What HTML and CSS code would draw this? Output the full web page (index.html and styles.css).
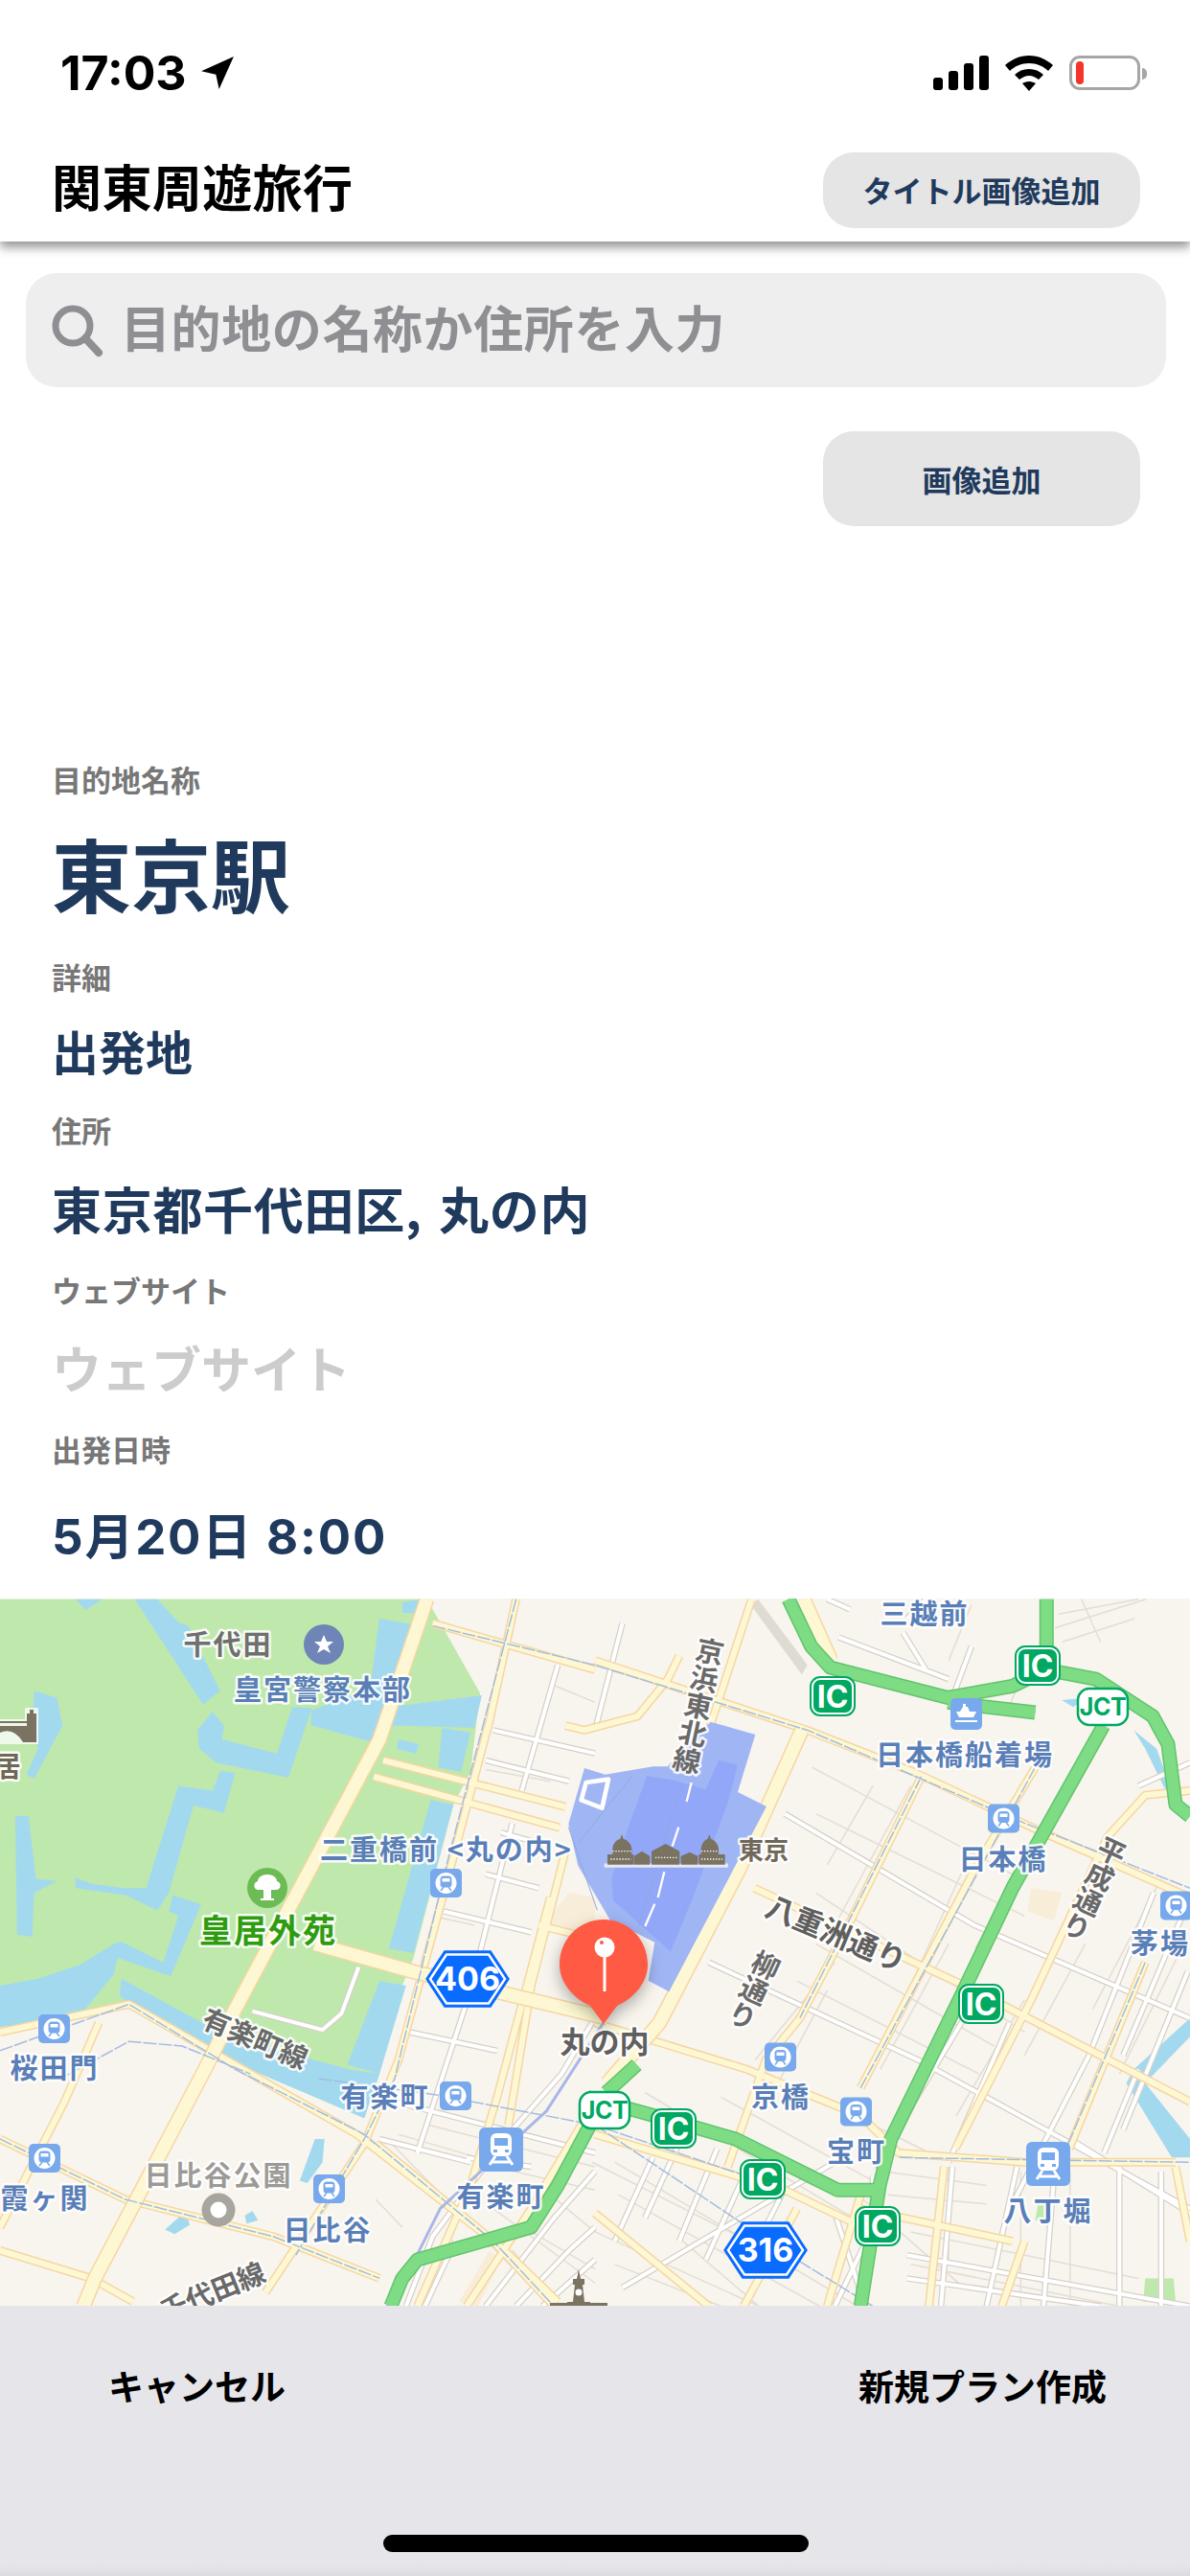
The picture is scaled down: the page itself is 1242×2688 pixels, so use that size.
FILE: index.html
```html
<!DOCTYPE html>
<html lang="ja">
<head>
<meta charset="utf-8">
<title>関東周遊旅行</title>
<link rel="stylesheet" href="styles.css">
</head>
<body>
<div class="page">
  <header class="top">
    <div class="status">
      <div class="clock"><span>17:03</span>
        <svg class="arrow" width="36" height="36" viewBox="0 0 33 33"><path d="M32 1 L1 15 L15 18 L18 32 Z"/></svg>
      </div>
      <div class="sys">
        <svg width="58" height="36" viewBox="0 0 58 36"><rect x="0" y="23" width="10" height="13" rx="3"/><rect x="16" y="16" width="10" height="20" rx="3"/><rect x="32" y="8" width="10" height="28" rx="3"/><rect x="48" y="0" width="10" height="36" rx="3"/></svg>
        <svg width="50" height="37" viewBox="0 0 50 37"><path d="M25 0 C15 0 7 4 0 10 L5 16 C10 11 17 8 25 8 C33 8 40 11 45 16 L50 10 C43 4 35 0 25 0 Z"/><path d="M25 14 C19 14 14 16 10 20 L15 25 C18 23 21 21 25 21 C29 21 32 23 35 25 L40 20 C36 16 31 14 25 14 Z"/><path d="M25 27 C22 27 20 28 18 29 L25 37 L32 29 C30 28 28 27 25 27 Z"/></svg>
        <div class="battery"><div class="level"></div><div class="nub"></div></div>
      </div>
    </div>
    <div class="titlebar">
      <h1 class="title">関東周遊旅行</h1>
      <button class="pill pill-title">タイトル画像追加</button>
    </div>
  </header>

  <main class="form">
    <div class="search">
      <svg width="56" height="56" viewBox="0 0 56 56" fill="none"><circle cx="23" cy="23" r="18" stroke="#8e8e93" stroke-width="7"/><path d="M36 36 L50 51" stroke="#8e8e93" stroke-width="8" stroke-linecap="round"/></svg>
      <span>目的地の名称か住所を入力</span>
    </div>
    <div class="image-row"><button class="pill pill-image">画像追加</button></div>

    <section class="fields">
      <div class="field f1"><div class="label">目的地名称</div><div class="value huge">東京駅</div></div>
      <div class="field f2"><div class="label">詳細</div><div class="value short">出発地</div></div>
      <div class="field f3"><div class="label">住所</div><div class="value address">東京都千代田区, 丸の内</div></div>
      <div class="field f4"><div class="label">ウェブサイト</div><div class="value empty">ウェブサイト</div></div>
      <div class="field f5"><div class="label">出発日時</div><div class="value date">5月20日 8:00</div></div>
    </section>
  </main>

  <div class="map">
    <svg class="map-svg" width="1242" height="738" viewBox="0 1668 1242 738">
      <defs>
        <symbol id="metro" viewBox="0 0 33 30">
          <rect width="33" height="30" rx="5" fill="#78a9ec"/>
          <circle cx="16.5" cy="15" r="11" fill="#fff"/>
          <rect x="10.5" y="7.500" width="12" height="12" rx="3.500" fill="#78a9ec"/>
          <rect x="12.500" y="10" width="8" height="3.500" fill="#fff"/>
          <path d="M11 23 L14 19 M22 23 L19 19" stroke="#78a9ec" stroke-width="1.500"/>
        </symbol>
        <symbol id="rail" viewBox="0 0 46 46">
          <rect width="46" height="46" rx="6" fill="#78a9ec"/>
          <rect x="12" y="6" width="22" height="24" rx="6" fill="#fff"/>
          <rect x="16" y="11" width="14" height="8" fill="#78a9ec"/>
          <rect x="15" y="23" width="4" height="3" fill="#78a9ec"/><rect x="27" y="23" width="4" height="3" fill="#78a9ec"/>
          <path d="M17 30 L11 39 M29 30 L35 39 M14 36 H32" stroke="#fff" stroke-width="3" fill="none"/>
        </symbol>
        <symbol id="ic" viewBox="0 0 48 42">
          <rect x="1" y="1" width="46" height="40" rx="10" fill="#fff" stroke="#00a862" stroke-width="2"/>
          <rect x="4" y="4" width="40" height="34" rx="7" fill="#00a862"/>
        </symbol>
        <symbol id="hex" viewBox="0 0 88 60">
          <path d="M20 1 H68 L87 30 L68 59 H20 L1 30 Z" fill="#0a6bff" stroke="#0a6bff" stroke-width="1.500"/>
          <path d="M22 4.500 H66 L83 30 L66 55.500 H22 L5 30 Z" fill="#0a6bff" stroke="#fff" stroke-width="2.500"/>
        </symbol>

        <g id="thin">
          <path d="M1250,1230 L1568,1290 M1130,1150 L1568,1240 M1020,1180 L1450,1540 M1300,1330 L1568,1490 M1350,1420 L1480,1540 M1400,1380 L1568,1460 M1450,1300 L1568,1380"/>
          <path d="M1568,1380 L2000,1540 M1630,1300 L2160,1540 M1620,1230 L2260,1540 M1700,1080 L2350,1400 M1900,1090 L2300,1270 M2000,1030 L2450,1210 M2150,650 L2700,950 M2150,760 L2620,980 M2100,840 L2580,1040 M2330,1250 L2600,1280 M2340,1300 L2600,1320 M2400,1380 L3000,1480 M2400,1450 L2950,1540 M2500,1240 V1440 M2690,1250 V1540 M2820,1250 V1540 M2950,1240 V1540"/>
          <path d="M2140,380 L2690,620 M2150,480 L2700,700 M2180,590 L2300,420 M2200,720 L2400,420 M2400,850 L2560,560 M2570,770 L2740,510 M1990,1010 L2200,800 M2050,1060 L2180,860 M2320,1030 L2500,760 M2520,1130 L2700,880 M2700,1000 L2860,760 M2880,900 L3060,620 M2950,1040 L3120,760 M2560,30 L2500,150 M2660,250 L2720,120 M2780,80 L3020,18 M2790,50 L3000,18 M2800,110 L2990,60 M2850,18 L2900,110"/>
          <path d="M1450,200 L1568,240 M1280,385 L1450,410 M1140,700 L1250,720 M1050,1170 L1300,1230 M990,1310 L1060,1370 M1560,1230 L2020,1420 M1620,1450 L1900,1540 M1800,1400 L2000,1540 M2260,1300 L2540,1500"/>
        </g>
        <g id="white">
          <path d="M1300,300 L1568,350 M1280,365 L1500,410 M1470,160 L1375,430 M1350,500 L1240,860 L1100,1210 M1170,690 L1400,735 M1080,950 L1310,990 M1040,1100 L1568,1210 M945,810 L900,910 L850,945 L665,905 M1320,520 L1450,550 M1280,610 L1420,640 M1000,1180 L1240,1230 M1230,1220 L1400,1240"/>
          <path d="M1070,1540 L1140,1390 L1340,1170 L1480,1040 L1560,930 M1120,1540 L1200,1400 M1280,1540 L1460,1350 L1568,1250 M1360,1540 L1500,1420 L1568,1370 M1430,1540 L1568,1440"/>
          <path d="M2068,480 L2568,720 L3136,920 M1868,800 L2420,1010 L3136,1330 M3040,650 L2870,1000 L2668,1320 M2570,880 L2350,1180 L2300,1240 M1568,1130 L1640,1050 M1720,1220 L1620,1400 M1800,1170 L1700,1350 M1890,1200 L1790,1400 M1960,1260 L1860,1440 M2060,1300 L1980,1430 M1640,1500 L2200,1230 M2200,1340 L2280,1540 M2300,1260 L2300,1370 L2200,1540 M2510,1240 L2480,1540 M2680,1240 L2600,1540 M2780,1240 L2750,1540 M2950,1240 L2950,1540 M3060,1250 L3060,1540 M2390,1430 L3136,1540 M2390,1480 L2900,1540 M2820,1180 L3136,1340 M2380,90 L2440,170 M2440,18 L2390,60 M2180,18 L2240,40 M2210,100 L2500,190 M2560,120 L2510,230 M3000,420 L3136,370 M3136,660 L2960,1000 M3130,820 L2960,1160 M2500,1230 L2660,930 M3000,1030 L2910,1210 M1568,300 L1640,70 M1620,440 L1570,520"/>
        </g>
        <g id="major">
          <path d="M1010,365 L1490,465 M985,400 L1475,510 M1140,70 L1568,170 M1360,18 L1290,280 L1170,650 L1050,1010 L960,1190 L700,1510 M0,950 L340,890 L640,1030 L940,1170 L1300,1400 L1460,1540 M260,930 L170,1100 L0,1370 M0,1180 L330,1310 L720,1390 L1000,1480 M0,1420 L240,1480 L350,1530 M990,1190 L1330,1420 L1470,1530 M1450,660 L1310,1090 L1240,1280 L1100,1540 M1490,560 L1400,850 L1340,1150 M1420,720 L1568,750 M1230,1540 L1400,1330 L1568,1100"/>
          <path d="M1568,150 L2128,300 L2408,390 L2748,520 L3136,660 M1568,930 L1968,1030 L2268,1130 L2368,1210 L2698,1230 L3098,1230 M2428,400 L2248,700 L2108,920 L2018,1010 L1918,1240 M2728,380 L2568,600 L2268,1070 M1988,640 L2568,860 L3136,1100 M2268,1330 L2668,1400 M3136,430 L3018,440 L2918,530 L2718,880 L2518,1200 M3018,800 L2818,1200 M2488,1240 L2448,1540 M3098,1240 L3136,1400 M1568,1170 L2068,1290 L2248,1360 M1568,1340 L1868,1540 M2100,1330 L1960,1540 M2700,1400 L2640,1540 M1980,20 L1868,300 M2268,1300 L2180,1540"/>
          <path d="M1490,290 L1540,300 L1680,270 L1760,190 L1790,140"/>
        </g>
        <g id="main">
          <path d="M1125,18 L1000,320 L620,900 L540,1030 L250,1480 L220,1540 M830,760 L1090,820 L1600,920"/>
          <path d="M2118,18 L2190,150 M2113,300 L1948,600 L1738,930 L1600,1060"/>
        </g>
        <g id="hw">
          <path d="M1030,1540 L1060,1480 L1100,1440 L1400,1370 L1470,1280 L1568,1130"/>
          <path d="M2078,18 L2138,120 L2188,165 L2498,230 L2668,205 L2758,170 L2758,18 M2758,170 L2888,190 L3038,270 L3078,330 L3098,460 L3136,485 M2908,290 L2668,640 L2528,880 L2348,1180 L2318,1280 L2268,1540 M1548,1090 L1768,1140 L1938,1180 L2208,1290 L2318,1290 M2498,240 L2728,262 M1598,1080 L1678,1020"/>
        </g>
        <g id="tracks">
          <path d="M1360,18 L1180,580 L1040,1050 L960,1180 L780,1430 M0,1180 L330,1310 L720,1390 L1000,1480 M1140,75 L1568,160 L2128,300 L2700,500 L3136,640 M0,990 L340,890 L620,1030 L960,1170 L1300,1400 L1460,1540 M840,1050 L1150,1085 L1568,1150 L2040,1280 L2060,1310 M160,1050 L340,970 L480,980 L660,1040 M1568,1150 L2100,1440 L2300,1540 M2428,400 L2108,920 M2728,380 L2268,1070 M3018,800 L2800,1220 M2370,1220 L3136,1230"/>
        </g>
        <g id="jr">
          <path d="M1590,930 L1440,1120 L1160,1330 L1050,1510 L1020,1540"/>
        </g>
      </defs>

      <rect class="land" x="0" y="1668" width="1242" height="738"/>

      <g class="zoomed" transform="translate(0 1660) scale(.39604 .48473)">
        <path class="park" d="M0,18 H1125 L1265,220 L1240,390 L1195,460 L1090,790 L1060,850 L1000,1040 L960,1135 L830,1090 L600,1010 L340,890 L130,915 L0,940 Z"/>
        <g class="water">
          <path d="M200,18 H270 L225,42 Z M355,18 H415 L470,68 L495,75 L580,215 L535,245 Z M1060,25 L1112,18 L1098,48 L1060,48 Z M1000,60 L1088,72 L1040,180 L1030,250 L1270,225 L1250,295 L1040,290 L980,325 L820,290 L820,258 L975,210 Z"/>
          <path d="M520,300 L560,260 L590,290 L585,320 L730,350 L770,250 L822,252 L760,402 L570,370 L525,340 Z M1165,295 L1240,305 L1215,390 L1155,380 Z M1050,320 L1105,330 L1095,350 L1045,340 Z"/>
          <path d="M470,420 L560,430 L580,388 L620,392 L590,478 L510,462 L445,650 L415,688 L330,655 L200,640 L198,618 L240,630 L325,640 L385,640 Z M40,485 H75 L95,620 L150,625 L90,650 L85,745 L45,740 Z"/>
          <path d="M0,850 L100,835 L210,805 L300,760 L320,755 L430,800 L470,700 L445,690 L455,655 L530,675 L450,830 L310,790 L300,825 L220,905 L100,935 L0,938 Z"/>
          <path d="M320,835 L600,960 L920,1030 L1000,1040 L960,1135 L830,1090 L600,1010 L340,890 L315,870 Z M1000,840 L1070,850 L1000,1040 L915,1020 Z M1135,450 L1195,460 L1090,780 L1025,770 Z M90,215 L150,230 L165,290 L90,405 L70,395 L100,340 L85,300 Z"/>
          <path d="M790,1270 L830,1180 L855,1180 L850,1230 L810,1275 Z M435,1375 L490,1335 L500,1365 L460,1385 Z M645,1345 L665,1335 L680,1355 L650,1362 Z"/>
        </g>
        <g transform="translate(1568 0)" class="water">
          <path d="M1420,300 L1480,340 L1520,430 L1568,475 L1510,440 L1450,340 Z M1568,920 L1420,1030 L1400,1060 L1520,1220 H1568 V1180 L1450,1060 L1568,960 Z M1230,235 L1300,230 L1260,250 Z"/>
          <path class="grey-ramp" d="M430,18 L560,160 L545,180 L410,30 Z"/>
          <path class="sand" d="M1150,640 L1230,650 L1210,710 L1140,690 Z"/>
          <path class="green-patch" d="M1450,1480 H1525 L1530,1530 H1445 Z"/>
          <path class="green-patch" d="M1170,1310 L1200,1310 L1190,1360 L1160,1355 Z"/>
        </g>
        <path class="sand" d="M1430,720 L1500,650 L1568,660 V750 Z"/>
        <path class="sand" d="M1210,1530 L1290,1420 L1320,1440 L1260,1540 Z"/>

        <use href="#thin" class="r-thin"/>
        <use href="#white" class="r-white-case"/>
        <use href="#white" class="r-white"/>
        <use href="#major" class="r-major-case"/>
        <use href="#major" class="r-major"/>
        <use href="#main" class="r-main-case"/>
        <use href="#main" class="r-main"/>
        <use href="#tracks" class="r-track"/>
        <use href="#jr" class="r-jr"/>
        <use href="#hw" class="r-hw-case"/>
        <use href="#hw" class="r-hw"/>
      </g>

      <g transform="translate(560 1780) scale(.3333)">
        <path class="station" d="M545,50 L685,90 L630,270 L720,315 L415,895 L350,860 L370,740 L230,670 L130,500 L100,370 L150,195 L215,215 L365,190 L410,190 Z"/>
        <path class="station-in" d="M345,220 L420,230 L530,262 L570,170 L630,185 L600,300 L490,600 L420,770 L240,610 L235,540 L280,400 Z"/>
        <path class="st-frame" d="M155,240 L225,230 L205,320 L140,295 Z"/>
        <path class="st-rail" d="M485,240 L470,300 M445,380 L425,440 M400,520 L380,600 M370,620 L340,690"/>
        <path class="st-track" d="M455,240 L320,690 M130,430 L300,220 M100,380 L190,640"/>

        <g class="landmark">
          <path class="halo" d="M212,500 H600"/>
          <path d="M222,497 V465 H238 V445 Q240,424 262,416 L267,402 L272,416 Q294,424 298,445 V465 H304 V497 Z"/>
          <path d="M305,497 V470 L330,455 L355,470 V497 Z"/>
          <path d="M360,497 V455 L404,432 L448,455 V497 Z"/>
          <path d="M452,497 V470 L480,458 L505,470 V497 Z"/>
          <path d="M508,497 V465 H515 V445 Q518,424 536,416 L541,402 L546,416 Q566,424 570,445 V465 H590 V497 Z"/>
          <path class="stripes" d="M232,480 H296 M238,455 H296 M372,475 H440 M516,455 H566 M516,480 H582"/>
        </g>
      </g>

      <g class="landmark">
        <path class="bridge-halo" d="M0,1794 H26 V1782 H40 V1820 H0 Z"/>
        <rect x="28" y="1788" width="10" height="30"/>
        <rect x="31" y="1784" width="4" height="5"/>
        <rect x="0" y="1796" width="28" height="2"/>
        <path d="M0,1801 H28 V1818 H24 Q14,1802 0,1808 Z"/>
        <path d="M592,2404 V2402 H598 L600,2384 H598 V2378 H602 L604,2368 L606,2378 H610 V2384 H608 L610,2402 H616 V2404 Z"/>
        <circle cx="604" cy="2392" r="3.500" fill="#fff"/>
        <rect x="574" y="2403" width="60" height="3"/>
      </g>

      <g class="poi">
        <circle cx="338" cy="1716" r="21" fill="#6f85b8"/>
        <path d="M338,1706 L341,1713 L348,1713 L342,1718 L345,1725 L338,1721 L331,1725 L334,1718 L328,1713 L335,1713 Z" fill="#fff"/>
        <circle cx="279" cy="1970" r="21" fill="#6cbb55"/>
        <path d="M279,1956 C286,1956 289,1960 289,1963 C294,1964 294,1972 288,1972 H283 V1981 H286 V1983 H272 V1981 H275 V1972 H270 C264,1972 264,1964 269,1963 C269,1960 272,1956 279,1956 Z" fill="#fff"/>
        <circle cx="228" cy="2306" r="13" fill="#fff" stroke="#a7a59e" stroke-width="9"/>
      </g>

      <use href="#metro" x="449" y="1949" width="33" height="32"/>
      <use href="#metro" x="40" y="2101" width="33" height="32"/>
      <use href="#metro" x="459" y="2171" width="33" height="32"/>
      <use href="#metro" x="30" y="2236" width="33" height="32"/>
      <use href="#metro" x="327" y="2268" width="33" height="32"/>
      <use href="#metro" x="1031" y="1881" width="33" height="33"/>
      <use href="#metro" x="798" y="2130" width="33" height="33"/>
      <use href="#metro" x="877" y="2187" width="33" height="33"/>
      <use href="#metro" x="1211" y="1972" width="33" height="33"/>
      <use href="#rail" x="500" y="2220" width="46" height="46"/>
      <use href="#rail" x="1071" y="2235" width="46" height="46"/>
      <rect class="ferry-bg" x="992" y="1772" width="33" height="33" rx="5"/>
      <path class="ferry" d="M1001,1792 L1016,1792 L1019,1786 H1012 L1010,1781 H1008 V1778 H1005 V1781 L1002,1786 H998 Z M997,1795 H1020 V1797 H997 Z"/>

      <use href="#ic" x="845" y="1749" width="48" height="42"/>
      <use href="#ic" x="1059" y="1717" width="48" height="42"/>
      <use href="#ic" x="1000" y="2070" width="48" height="42"/>
      <use href="#ic" x="679" y="2200" width="48" height="42"/>
      <use href="#ic" x="772" y="2253" width="48" height="42"/>
      <use href="#ic" x="892" y="2302" width="48" height="42"/>
      <text class="sign" x="869" y="1782">IC</text>
      <text class="sign" x="1083" y="1750">IC</text>
      <text class="sign" x="1024" y="2103">IC</text>
      <text class="sign" x="703" y="2233">IC</text>
      <text class="sign" x="796" y="2286">IC</text>
      <text class="sign" x="916" y="2335">IC</text>
      <rect class="jct-box" x="1125" y="1762" width="52" height="38" rx="12"/>
      <text class="jct" x="1151" y="1790">JCT</text>
      <rect class="jct-box" x="605" y="2183" width="52" height="38" rx="12"/>
      <text class="jct" x="631" y="2211">JCT</text>

      <use href="#hex" x="444" y="2035" width="88" height="60"/>
      <use href="#hex" x="755" y="2318" width="88" height="60"/>
      <text class="route" x="488" y="2077">406</text>
      <text class="route" x="799" y="2360">316</text>

      <g class="labels">
        <text class="blue" x="965" y="1695">三越前</text>
        <text class="gray" x="238" y="1727">千代田</text>
        <text class="blue" x="337" y="1774">皇宮警察本部</text>
        <text class="brown" x="8" y="1854">居</text>
        <text class="blue" x="466" y="1941">二重橋前 &lt;丸の内&gt;</text>
        <text class="green" x="280" y="2027">皇居外苑</text>
        <text class="road" x="266" y="2128" transform="rotate(23 266 2128)" dy="10">有楽町線</text>
        <text class="blue" x="57" y="2169">桜田門</text>
        <text class="blue" x="402" y="2199">有楽町</text>
        <text class="blue" x="47" y="2305">霞ヶ関</text>
        <text class="light" x="228" y="2281">日比谷公園</text>
        <text class="blue" x="342" y="2338">日比谷</text>
        <text class="blue" x="523" y="2303">有楽町</text>
        <text class="road" x="222" y="2392" transform="rotate(-22 222 2392)" dy="10">千代田線</text>
        <text class="road strong" x="631" y="2142">丸の内</text>
        <text class="road vert" x="729" y="1780" transform="rotate(12 729 1780)">京浜東北線</text>
        <text class="road small" x="797" y="1940">東京</text>
        <text class="blue" x="1007" y="1842">日本橋船着場</text>
        <text class="blue" x="1047" y="1951">日本橋</text>
        <text class="road strong" x="872" y="2019" transform="rotate(23 872 2019)" dy="10">八重洲通り</text>
        <text class="road vert" x="787" y="2077" transform="rotate(25 787 2077)">柳通り</text>
        <text class="road vert" x="1142" y="1971" transform="rotate(25 1142 1971)">平成通り</text>
        <text class="blue" x="1211" y="2039">茅場</text>
        <text class="blue" x="815" y="2199">京橋</text>
        <text class="blue" x="894" y="2256">宝町</text>
        <text class="blue" x="1094" y="2318">八丁堀</text>
      </g>

      <g class="pin">
        <path class="pin-body" d="M630,2112 L616,2093 C600,2086 584,2070 584,2050 C584,2024 604,2003 630,2003 C656,2003 676,2024 676,2050 C676,2070 660,2086 644,2093 Z"/>
        <rect class="pin-stick" x="629.500" y="2042" width="3" height="36"/>
        <circle class="pin-ball" cx="631" cy="2032" r="10.500"/>
        <circle class="pin-dot" cx="628" cy="2027" r="2"/>
      </g>
    </svg>
  </div>

  <footer class="bar">
    <div class="actions"><span class="action">キャンセル</span><span class="action">新規プラン作成</span></div>
    <div class="home"></div>
  </footer>
</div>
</body>
</html>
```
FILE: styles.css
```css
* { box-sizing: border-box; }
html, body { margin: 0; padding: 0; background: #fff; }
body { font-family: "Noto Sans CJK JP", "Noto Sans", sans-serif; }

.page { width: 1242px; height: 2688px; display: flex; flex-direction: column; overflow: hidden; background: #fff; }

.top { height: 252px; background: #fff; box-shadow: 0 6px 10px rgba(0, 0, 0, .42); position: relative; z-index: 2; flex: none; }
.status { height: 140px; padding: 58px 52px 0 63px; display: flex; justify-content: space-between; align-items: flex-start; }
.clock { display: flex; align-items: flex-start; gap: 14px; font: 700 50px/36px Inter, sans-serif; color: #000; }
.arrow { margin-top: 0; }
.sys { display: flex; align-items: flex-start; gap: 17px; }
.battery { width: 74px; height: 36px; border: 3px solid #a6a6a6; border-radius: 11px; position: relative; padding: 3px 4px; }
.level { width: 8px; height: 24px; border-radius: 4px; background: #f4352c; }
.nub { position: absolute; left: 73px; top: 10px; width: 5px; height: 12px; border-radius: 0 5px 5px 0; background: #a6a6a6; }

.titlebar { height: 112px; padding: 19px 52px 0 54px; display: flex; justify-content: space-between; align-items: flex-start; }
.title { margin: -3px 0 0; font-size: 52px; line-height: 76px; letter-spacing: .4px; font-weight: 700; color: #000; }
.pill { border: 0; background: #e5e5e5; color: #1f3a5c; font-family: inherit; font-weight: 700; font-size: 31px; width: 331px; border-radius: 32px; padding: 0; }
.pill-title { height: 79px; padding-bottom: 2px; }
.pill-image { height: 99px; }

.form { flex: 1; min-height: 0; padding-top: 33px; }
.search { margin: 0 25px 0 27px; height: 119px; border-radius: 32px; background: #eee; display: flex; align-items: center; padding-left: 26px; gap: 17px; color: #8e8e93; font-size: 52px; letter-spacing: .6px; font-weight: 700; }
.search span { margin-top: -9px; }
.image-row { display: flex; justify-content: flex-end; padding: 46px 52px 0 0; }

.fields { padding: 244px 54px 0; }
.label { font-size: 31px; line-height: 40px; font-weight: 700; color: #777; }
.value { font-size: 52px; line-height: 80px; font-weight: 700; color: #1f3a5c; white-space: nowrap; }
.value.huge { font-size: 83px; line-height: 116px; }
.value.short { font-size: 49px; }
.value.address { letter-spacing: .7px; word-spacing: 5px; }
.value.empty { color: #ccc; }
.value.date { font-family: Inter, "Noto Sans CJK JP", sans-serif; font-size: 51px; letter-spacing: 1.8px; }

.f1 .label { margin-bottom: 19px; }
.f2 { margin-top: 31px; }
.f2 .label { margin-bottom: 17px; }
.f3 { margin-top: 23px; }
.f3 .label { margin-bottom: 22px; }
.f4 { margin-top: 25px; }
.f4 .label { margin-bottom: 21px; }
.f5 { margin-top: 25px; }
.f5 .label { margin-bottom: 32px; }

.map { height: 738px; flex: none; overflow: hidden; }
.map-svg { display: block; }
.map-svg defs g path { vector-effect: non-scaling-stroke; }
.land { fill: #f8f4ee; }
.park { fill: #bfe8ac; }
.water path { fill: #a3d9ef; }
.water .sand, .sand { fill: #f8edd8; }
.water .grey-ramp { fill: #dedcd2; }
.water .green-patch { fill: #bfe8ac; }

.r-thin, .r-white, .r-white-case, .r-major, .r-major-case, .r-main, .r-main-case, .r-track, .r-jr, .r-hw, .r-hw-case { fill: none; stroke-linejoin: round; }
.r-thin { stroke: #e3ded4; stroke-width: 1.500; }
.r-white-case { stroke: #d5d1c8; stroke-width: 6.500; }
.r-white { stroke: #fff; stroke-width: 4; }
.r-major-case { stroke: #f6d6a2; stroke-width: 9; }
.r-major { stroke: #fdf8d3; stroke-width: 6; }
.r-main-case { stroke: #f6d6a2; stroke-width: 16; }
.r-main { stroke: #fdf8d3; stroke-width: 13; }
.r-track { stroke: #a3bce0; stroke-width: 1.500; stroke-dasharray: 14 2; }
.r-jr { stroke: #a9b6e8; stroke-width: 3; }
.r-hw-case { stroke: #62c46e; stroke-width: 15; }
.r-hw { stroke: #7edc84; stroke-width: 12; }

.station { fill: #a0b6f4; }
.station-in { fill: #93a7f9; }
.st-frame { fill: #a0b6f4; stroke: #fff; stroke-width: 14; stroke-linejoin: round; }
.st-rail { fill: none; stroke: #fff; stroke-width: 7; }
.st-track { fill: none; stroke: #8fa9dc; stroke-width: 3; }

.landmark path, .landmark rect { fill: #7b7361; }
.landmark .bridge-halo { fill: rgba(255, 255, 255, .75); }
.landmark .halo { fill: none; stroke: #e8e8f0; stroke-width: 13; }
.landmark .stripes { fill: none; stroke: #fff; stroke-width: 4; stroke-dasharray: 4 5; }
.ferry-bg { fill: #78a9ec; }
.ferry { fill: #fff; }

.labels text { font-family: "Noto Sans CJK JP", sans-serif; font-size: 29px; letter-spacing: 2px; text-anchor: middle; paint-order: stroke; stroke: rgba(255, 255, 255, .88); stroke-width: 5px; stroke-linejoin: round; font-weight: 500; }
.labels .blue { fill: #5a7fb8; font-weight: 700; }
.labels .gray { fill: #6f6f6f; font-weight: 700; }
.labels .brown { fill: #6f675a; font-weight: 700; }
.labels .green { fill: #2f9c10; font-size: 34px; font-weight: 700; }
.labels .light { fill: #9a9a96; font-weight: 700; }
.labels .road { fill: #696969; font-weight: 700; letter-spacing: 0; }
.labels .strong { fill: #5f5f5f; font-size: 31px; }
.labels .small { fill: #6f675a; font-size: 26px; }
.labels .vert { writing-mode: vertical-rl; }

.sign { font: 700 32px Inter, sans-serif; fill: #fff; text-anchor: middle; }
.jct { font: 700 25px Inter, sans-serif; fill: #00a862; text-anchor: middle; letter-spacing: -.5px; }
.jct-box { fill: #fff; stroke: #00a862; stroke-width: 2.500; }
.route { font: 700 34px Inter, sans-serif; fill: #fff; text-anchor: middle; }

.pin { filter: drop-shadow(0 6px 8px rgba(0, 0, 0, .3)); }
.pin-body { fill: #fe5a44; }
.pin-stick, .pin-ball { fill: #fff; }
.pin-dot { fill: #fe5a44; }

.bar { height: 282px; flex: none; background: linear-gradient(#e5e5ea 0, #e5e5ea 96%, #dcdce0 100%); position: relative; }
.actions { display: flex; justify-content: space-between; padding: 58px 87px 0 113px; }
.action { font-size: 37px; line-height: 50px; font-weight: 700; color: #000; }
.home { position: absolute; left: 400px; top: 239px; width: 444px; height: 18px; border-radius: 9px; background: #000; }
```
